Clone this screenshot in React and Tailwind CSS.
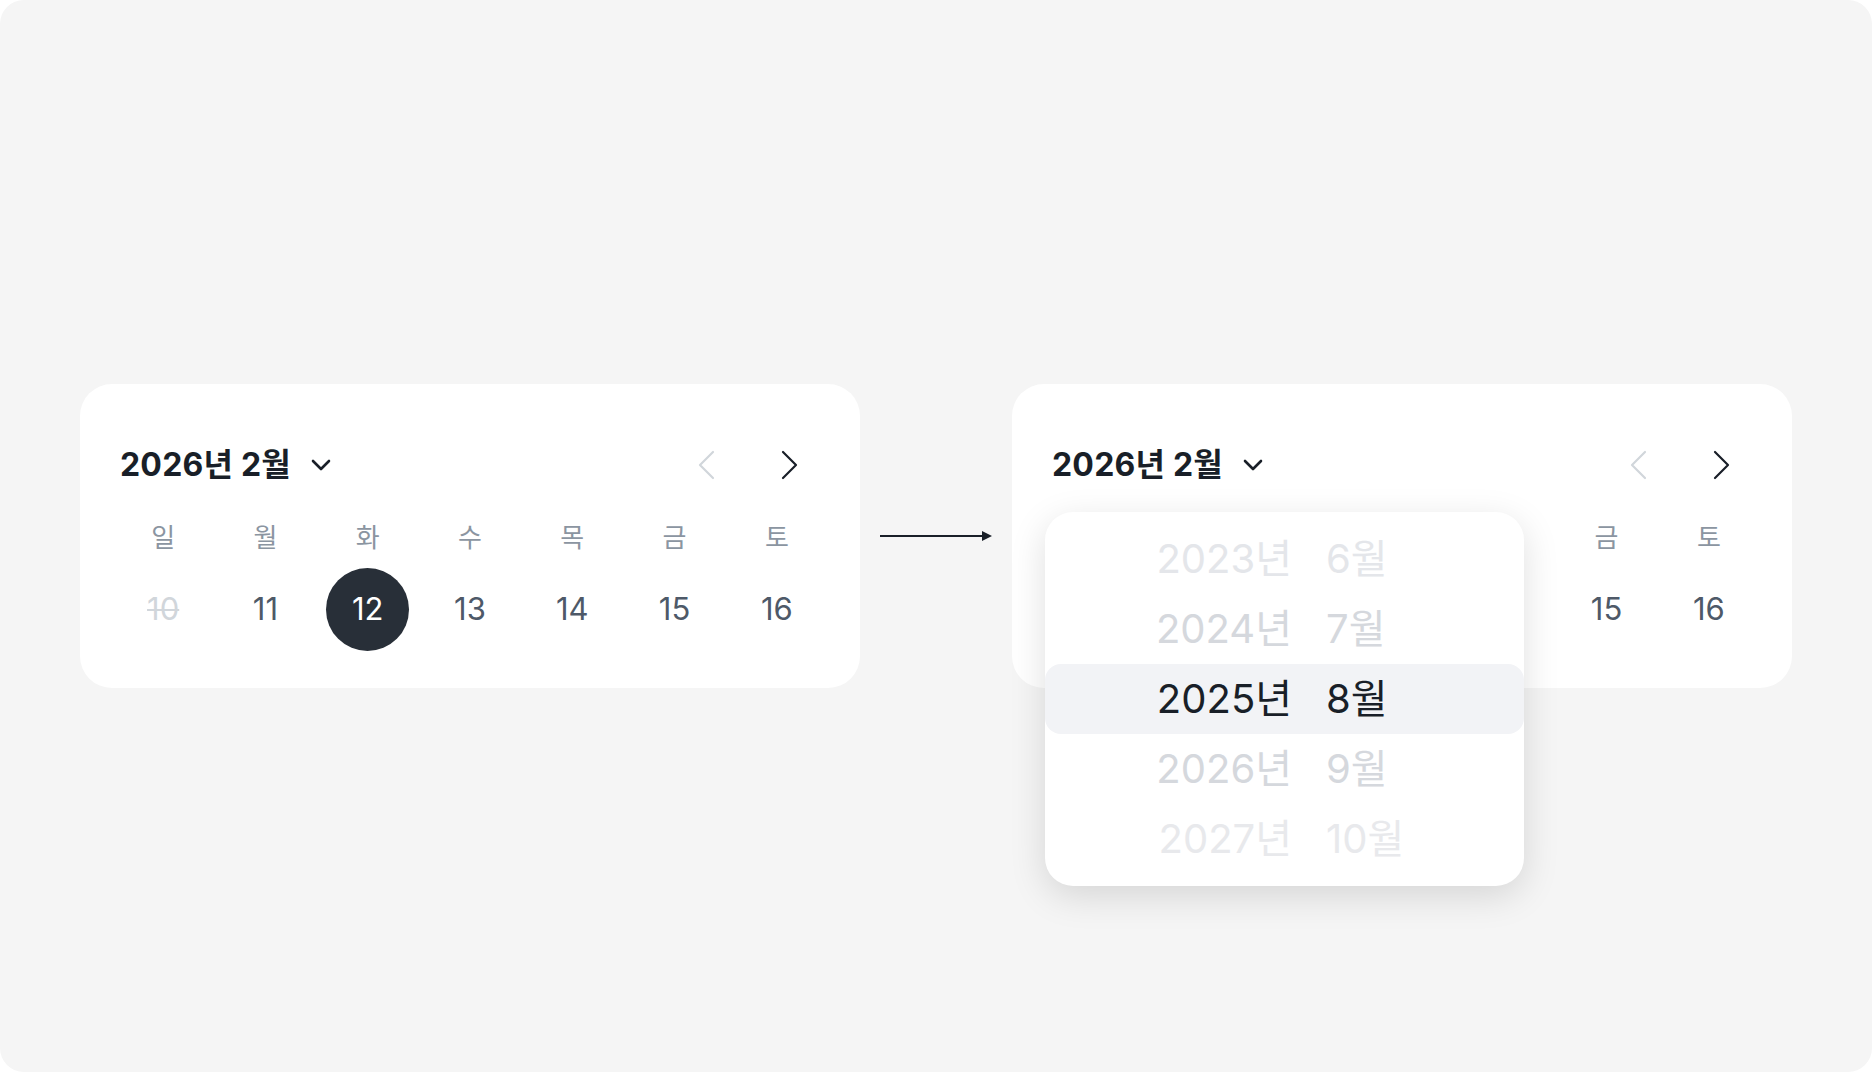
import React from 'react';

const FONT = { fontFamily: 'Inter, "Noto Sans CJK KR", sans-serif' };

const weekdays = ['일', '월', '화', '수', '목', '금', '토'];
const dates = [
  { d: 10, state: 'past' },
  { d: 11 },
  { d: 12, state: 'selected' },
  { d: 13 },
  { d: 14 },
  { d: 15 },
  { d: 16 },
];

const wheel = [
  { y: '2023년', m: '6월', color: 'text-[#e4e6ea]' },
  { y: '2024년', m: '7월', color: 'text-[#d5d8dd]' },
  { y: '2025년', m: '8월', color: 'text-[#191f28]', active: true },
  { y: '2026년', m: '9월', color: 'text-[#d5d8dd]' },
  { y: '2027년', m: '10월', color: 'text-[#e8e9ec]' },
];

function Chevron({ dir, className }) {
  return (
    <svg width="18" height="30" viewBox="0 0 18 30" fill="none" className={className}>
      <path
        d={dir === 'left' ? 'M16 2 L3 15 L16 28' : 'M2 2 L15 15 L2 28'}
        stroke="currentColor"
        strokeWidth="2.2"
        strokeLinecap="round"
        strokeLinejoin="round"
      />
    </svg>
  );
}

function CalendarCard({ children }) {
  return (
    <div className="relative w-[780px] rounded-[32px] bg-white px-8 pt-[59px] pb-[37px]">
      {/* header */}
      <div className="flex h-11 items-center justify-between pl-2 pr-[18px]">
        <div className="flex items-center gap-[20px]">
          <span className="text-[32px] font-bold tracking-[0.2px] text-[#191f28]">2026년 2월</span>
          <svg width="20" height="12" viewBox="0 0 20 12" fill="none" className="text-[#191f28]">
            <path d="M2 2 L10 10 L18 2" stroke="currentColor" strokeWidth="2.6" strokeLinecap="round" strokeLinejoin="round" />
          </svg>
        </div>
        <div className="flex items-center gap-[44px]">
          <button className="flex h-10 w-10 items-center justify-center">
            <Chevron dir="left" className="text-[#d1d6db]" />
          </button>
          <button className="flex h-10 w-10 items-center justify-center">
            <Chevron dir="right" className="text-[#191f28]" />
          </button>
        </div>
      </div>

      {/* weekdays */}
      <div className="mt-[30px] grid grid-cols-7">
        {weekdays.map((w) => (
          <div key={w} className="flex h-10 items-center justify-center text-[26px] text-[#8b95a1]">
            {w}
          </div>
        ))}
      </div>

      {/* dates */}
      <div className="mt-[11px] grid grid-cols-7">
        {dates.map((x) => (
          <div key={x.d} className="flex items-center justify-center">
            {x.state === 'selected' ? (
              <div className="flex h-[83px] w-[83px] items-center justify-center rounded-full bg-[#282f38] text-[31px] text-white">
                {x.d}
              </div>
            ) : (
              <div
                className={
                  'flex h-[83px] w-[83px] items-center justify-center text-[31px] ' +
                  (x.state === 'past' ? 'text-[#d1d6db] line-through decoration-2' : 'text-[#4e5968]')
                }
              >
                {x.d}
              </div>
            )}
          </div>
        ))}
      </div>
      {children}
    </div>
  );
}

function WheelPopover() {
  return (
    <div className="absolute left-[33px] top-[128px] w-[479px] rounded-[28px] bg-white py-3 shadow-[0_10px_36px_rgba(0,0,0,0.13)]">
      {wheel.map((r) => (
        <div
          key={r.y}
          className={'flex h-[70px] items-center text-[40px] ' + r.color + (r.active ? ' rounded-[16px] bg-[#f2f3f6]' : '')}
        >
          <span className="w-[247px] text-right">{r.y}</span>
          <span className="pl-[34px]">{r.m}</span>
        </div>
      ))}
    </div>
  );
}

export default function App() {
  return (
    <div className="bg-white" style={FONT}>
      <div className="flex h-[1072px] w-[1872px] items-center justify-center rounded-[24px] bg-[#f5f5f5]">
        <CalendarCard />
        <div className="flex w-[152px] items-center justify-center">
          <svg width="112" height="12" viewBox="0 0 112 12">
            <line x1="0" y1="6" x2="103" y2="6" stroke="#191f28" strokeWidth="2" />
            <path d="M102 1 L112 6 L102 11 Z" fill="#191f28" />
          </svg>
        </div>
        <CalendarCard>
          <WheelPopover />
        </CalendarCard>
      </div>
    </div>
  );
}
